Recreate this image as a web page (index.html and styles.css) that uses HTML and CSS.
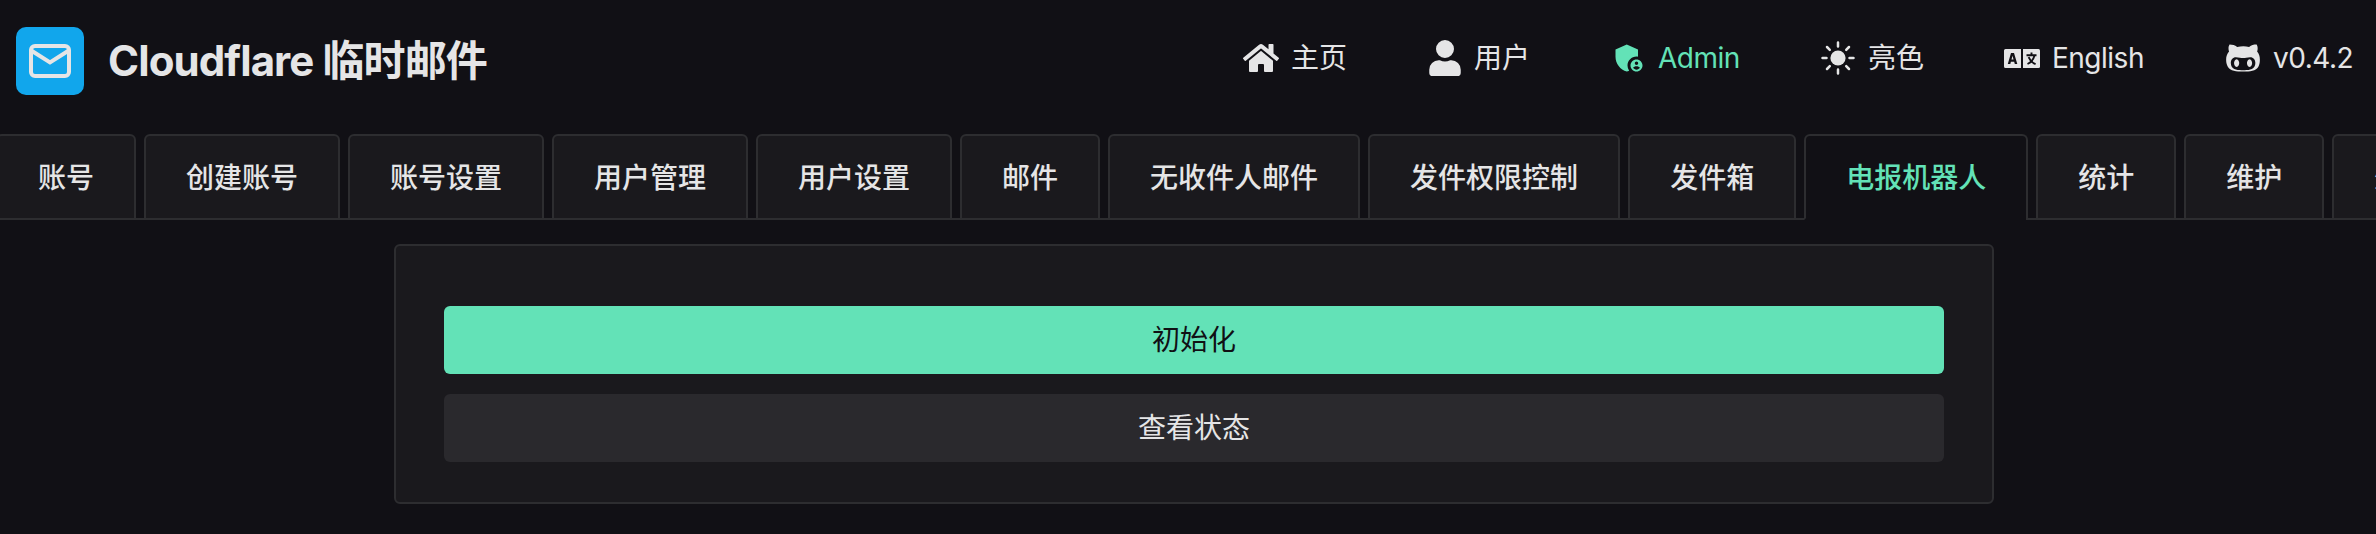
FILE: index.html
```html
<!DOCTYPE html>
<html lang="zh-CN">
<head>
<meta charset="utf-8">
<title>Cloudflare 临时邮件</title>
<link rel="stylesheet" href="styles.css">
</head>
<body>
<header class="header">
  <div class="brand">
    <svg class="logo" viewBox="0 0 68 68"><rect width="68" height="68" rx="10" fill="#11a6ec"/><rect x="15" y="19" width="38" height="30" rx="4" fill="none" stroke="#e5e5e6" stroke-width="4"/><path d="M16 24l18 11.5L52 24" fill="none" stroke="#e5e5e6" stroke-width="4"/></svg>
    <h1 class="title">Cloudflare 临时邮件</h1>
  </div>
  <nav class="menu">
    <a class="item home"><svg class="icon" viewBox="0 0 576 512"><path d="M280.4 148.3L96 300.1V464a16 16 0 0 0 16 16l112-.3a16 16 0 0 0 16-16V368a16 16 0 0 1 16-16h64a16 16 0 0 1 16 16v95.6a16 16 0 0 0 16 16.1l112 .3a16 16 0 0 0 16-16V300L295.7 148.3a12.200 12.200 0 0 0-15.300 0zM571.600 251.500L488 182.600V44a12 12 0 0 0-12-12h-56a12 12 0 0 0-12 12v72.600L318.500 43a48 48 0 0 0-61 0L4.300 251.500a12 12 0 0 0-1.600 16.900l25.500 31a12 12 0 0 0 16.900 1.600L280.400 107.200a12.200 12.200 0 0 1 15.300 0L531 301a12 12 0 0 0 16.900-1.600l25.500-31a12 12 0 0 0-1.800-16.900z"/></svg><span>主页</span></a>
    <a class="item user"><svg class="icon" viewBox="0 0 448 512"><path d="M224 256a128 128 0 1 0 0-256 128 128 0 1 0 0 256zm89.600 32h-16.700a174.100 174.100 0 0 1-145.800 0h-16.700A134.400 134.400 0 0 0 0 422.400V464a48 48 0 0 0 48 48h352a48 48 0 0 0 48-48v-41.600A134.400 134.400 0 0 0 313.600 288z"/></svg><span>用户</span></a>
    <a class="item admin"><svg class="icon" viewBox="0 0 24 24"><path d="M17 11c.34 0 .67.04 1 .09V6.270L10.500 3 3 6.270v4.910c0 4.540 3.200 8.790 7.500 9.820.55-.13 1.080-.32 1.600-.55A5.970 5.970 0 0 1 11 17c0-3.310 2.690-6 6-6z"/><path d="M17 13c-2.210 0-4 1.790-4 4s1.790 4 4 4 4-1.790 4-4-1.790-4-4-4zm0 1.380c.62 0 1.120.51 1.120 1.120s-.51 1.120-1.120 1.120-1.120-.51-1.120-1.120.5-1.120 1.120-1.120zm0 5.370c-.93 0-1.740-.46-2.240-1.170.05-.72 1.510-1.080 2.240-1.080s2.190.36 2.240 1.080c-.5.710-1.310 1.170-2.240 1.170z"/></svg><span>Admin</span></a>
    <a class="item theme"><svg class="icon" viewBox="0 0 34 34"><circle cx="17" cy="17" r="7.600"/><path d="M17 1.500v4M17 28.500v4M1.500 17h4M28.500 17h4M6 6l2.800 2.800M25.200 25.200l2.800 2.800M6 28l2.800-2.800M25.200 8.800L28 6" stroke="currentColor" stroke-width="2.500" stroke-linecap="round"/></svg><span>亮色</span></a>
    <a class="item lang"><svg class="icon" viewBox="0 0 36 19"><path fill-rule="evenodd" d="M1.500 0H17v19H1.500Q0 19 0 17.500v-16Q0 0 1.500 0zM7 4L3.800 15h2.500l.6-2.200h3.300l.6 2.200h2.500L10 4zm.5 6.600l1-3.800 1 3.800z"/><path d="M19 0h15.500Q36 0 36 1.500v16q0 1.500-1.500 1.500H19z"/><path d="M27.500 3.500v2.700M22.500 6.300h10M30.500 6.500q-1.500 6-7 8.500M24.600 8.200q2 5 7 7" fill="none" stroke="#111015" stroke-width="1.900"/></svg><span>English</span></a>
    <a class="item version"><svg class="icon" viewBox="0 0 480 512"><path d="M186.100 328.700c0 20.900-10.900 55.100-36.700 55.100s-36.700-34.200-36.700-55.100 10.900-55.100 36.700-55.100 36.700 34.200 36.700 55.100zM480 278.200c0 31.900-3.200 65.700-17.500 95-37.900 76.600-142.100 74.800-216.700 74.800-75.800 0-186.200 2.700-225.600-74.800-14.600-29-20.200-63.100-20.200-95 0-41.900 13.900-81.500 41.500-113.600-5.200-15.800-7.700-32.400-7.700-48.800 0-21.500 4.900-32.300 14.600-51.800 45.300 0 74.300 9 108.800 36 29-6.900 58.800-10 88.700-10 27 0 54.200 2.900 80.400 9.200 34-26.700 63-35.200 107.800-35.200 9.800 19.500 14.600 30.300 14.600 51.800 0 16.400-2.600 32.700-7.700 48.200 27.500 32.400 39 72.300 39 114.200zm-64.300 50.500c0-43.900-26.700-82.600-73.500-82.600-18.900 0-37 3.400-56 6-14.900 2.300-29.800 3.200-45.100 3.200-15.200 0-30.100-.9-45.100-3.200-18.700-2.600-37-6-56-6-46.800 0-73.500 38.700-73.500 82.600 0 87.800 80.400 101.300 150.400 101.300h48.200c70.300 0 150.600-13.400 150.600-101.300zm-82.600-55.100c-25.800 0-36.700 34.200-36.700 55.100s10.900 55.100 36.700 55.100 36.700-34.200 36.700-55.100-10.900-55.100-36.700-55.100z"/></svg><span>v0.4.2</span></a>
  </nav>
</header>
<div class="tabs">
  <div class="tab">账号</div><div class="tab">创建账号</div><div class="tab">账号设置</div><div class="tab">用户管理</div><div class="tab">用户设置</div><div class="tab">邮件</div><div class="tab">无收件人邮件</div><div class="tab">发件权限控制</div><div class="tab">发件箱</div><div class="tab active">电报机器人</div><div class="tab">统计</div><div class="tab">维护</div><div class="tab">外观</div>
</div>
<main class="card">
  <button class="btn primary">初始化</button>
  <button class="btn">查看状态</button>
</main>
</body>
</html>
```
FILE: styles.css
```css
* { box-sizing: border-box; }
html { height: 534px; overflow: hidden; }
body { margin: 0; height: 534px; overflow: hidden; background: #111015; color: #e5e5e6; font-family: Inter, "Noto Sans CJK SC", sans-serif; font-size: 28px; }
.header { display: flex; align-items: flex-start; justify-content: space-between; height: 134px; padding: 0 25px 0 16px; }
.brand { display: flex; align-items: center; gap: 24px; margin-top: 27px; height: 68px; }
.logo { width: 68px; height: 68px; }
.title { margin: 0; font-size: 42px; line-height: 60px; font-weight: 700; letter-spacing: -0.9px; white-space: nowrap; }
.menu { display: flex; height: 84px; margin-top: 16px; }
.item { display: flex; align-items: center; white-space: nowrap; }
.item span { line-height: 40px; }
.icon { fill: currentColor; flex: none; display: block; }
.home .icon { width: 36px; height: 32px; margin-right: 12px; }
.home { width: 186px; }
.user .icon { width: 32px; height: 36px; margin-right: 13px; }
.user { width: 182px; }
.admin .icon { width: 36px; height: 36px; margin-right: 11px; }
.admin { width: 210px; color: #63e2b7; }
.admin span, .lang span, .version span { letter-spacing: -0.5px; }
.theme .icon { width: 34px; height: 34px; margin-right: 13px; }
.theme { width: 183px; }
.lang .icon { width: 36px; height: 19px; margin-right: 12px; }
.lang { width: 222px; }
.version .icon { width: 34px; height: 36px; margin-right: 13px; }
.version { width: 125px; }
.tabs { display: flex; height: 86px; margin-left: -4px; width: 2480px; }
.tab { flex: none; height: 86px; padding: 1px 40px 0; border: 2px solid #2d2d30; border-radius: 6px 6px 0 0; background: #1a191d; font-weight: 500; line-height: 82px; white-space: nowrap; margin-right: 8px; position: relative; }
.tab::after { content: ""; position: absolute; left: 100%; bottom: -2px; width: 12px; height: 2px; background: #2d2d30; }
.tab.active { background: #111015; border-bottom-color: #111015; color: #63e2b7; }
.card { width: 1600px; height: 260px; margin: 24px 0 0 394px; padding: 60px 48px; border: 2px solid #2d2d30; border-radius: 6px; background: #1a191d; display: flex; flex-direction: column; gap: 20px; }
.btn { height: 68px; padding: 0; border: 0; border-radius: 6px; background: #2a292d; color: #e5e5e6; font: inherit; line-height: 68px; }
.primary { background: #63e2b7; color: #101014; }
```
